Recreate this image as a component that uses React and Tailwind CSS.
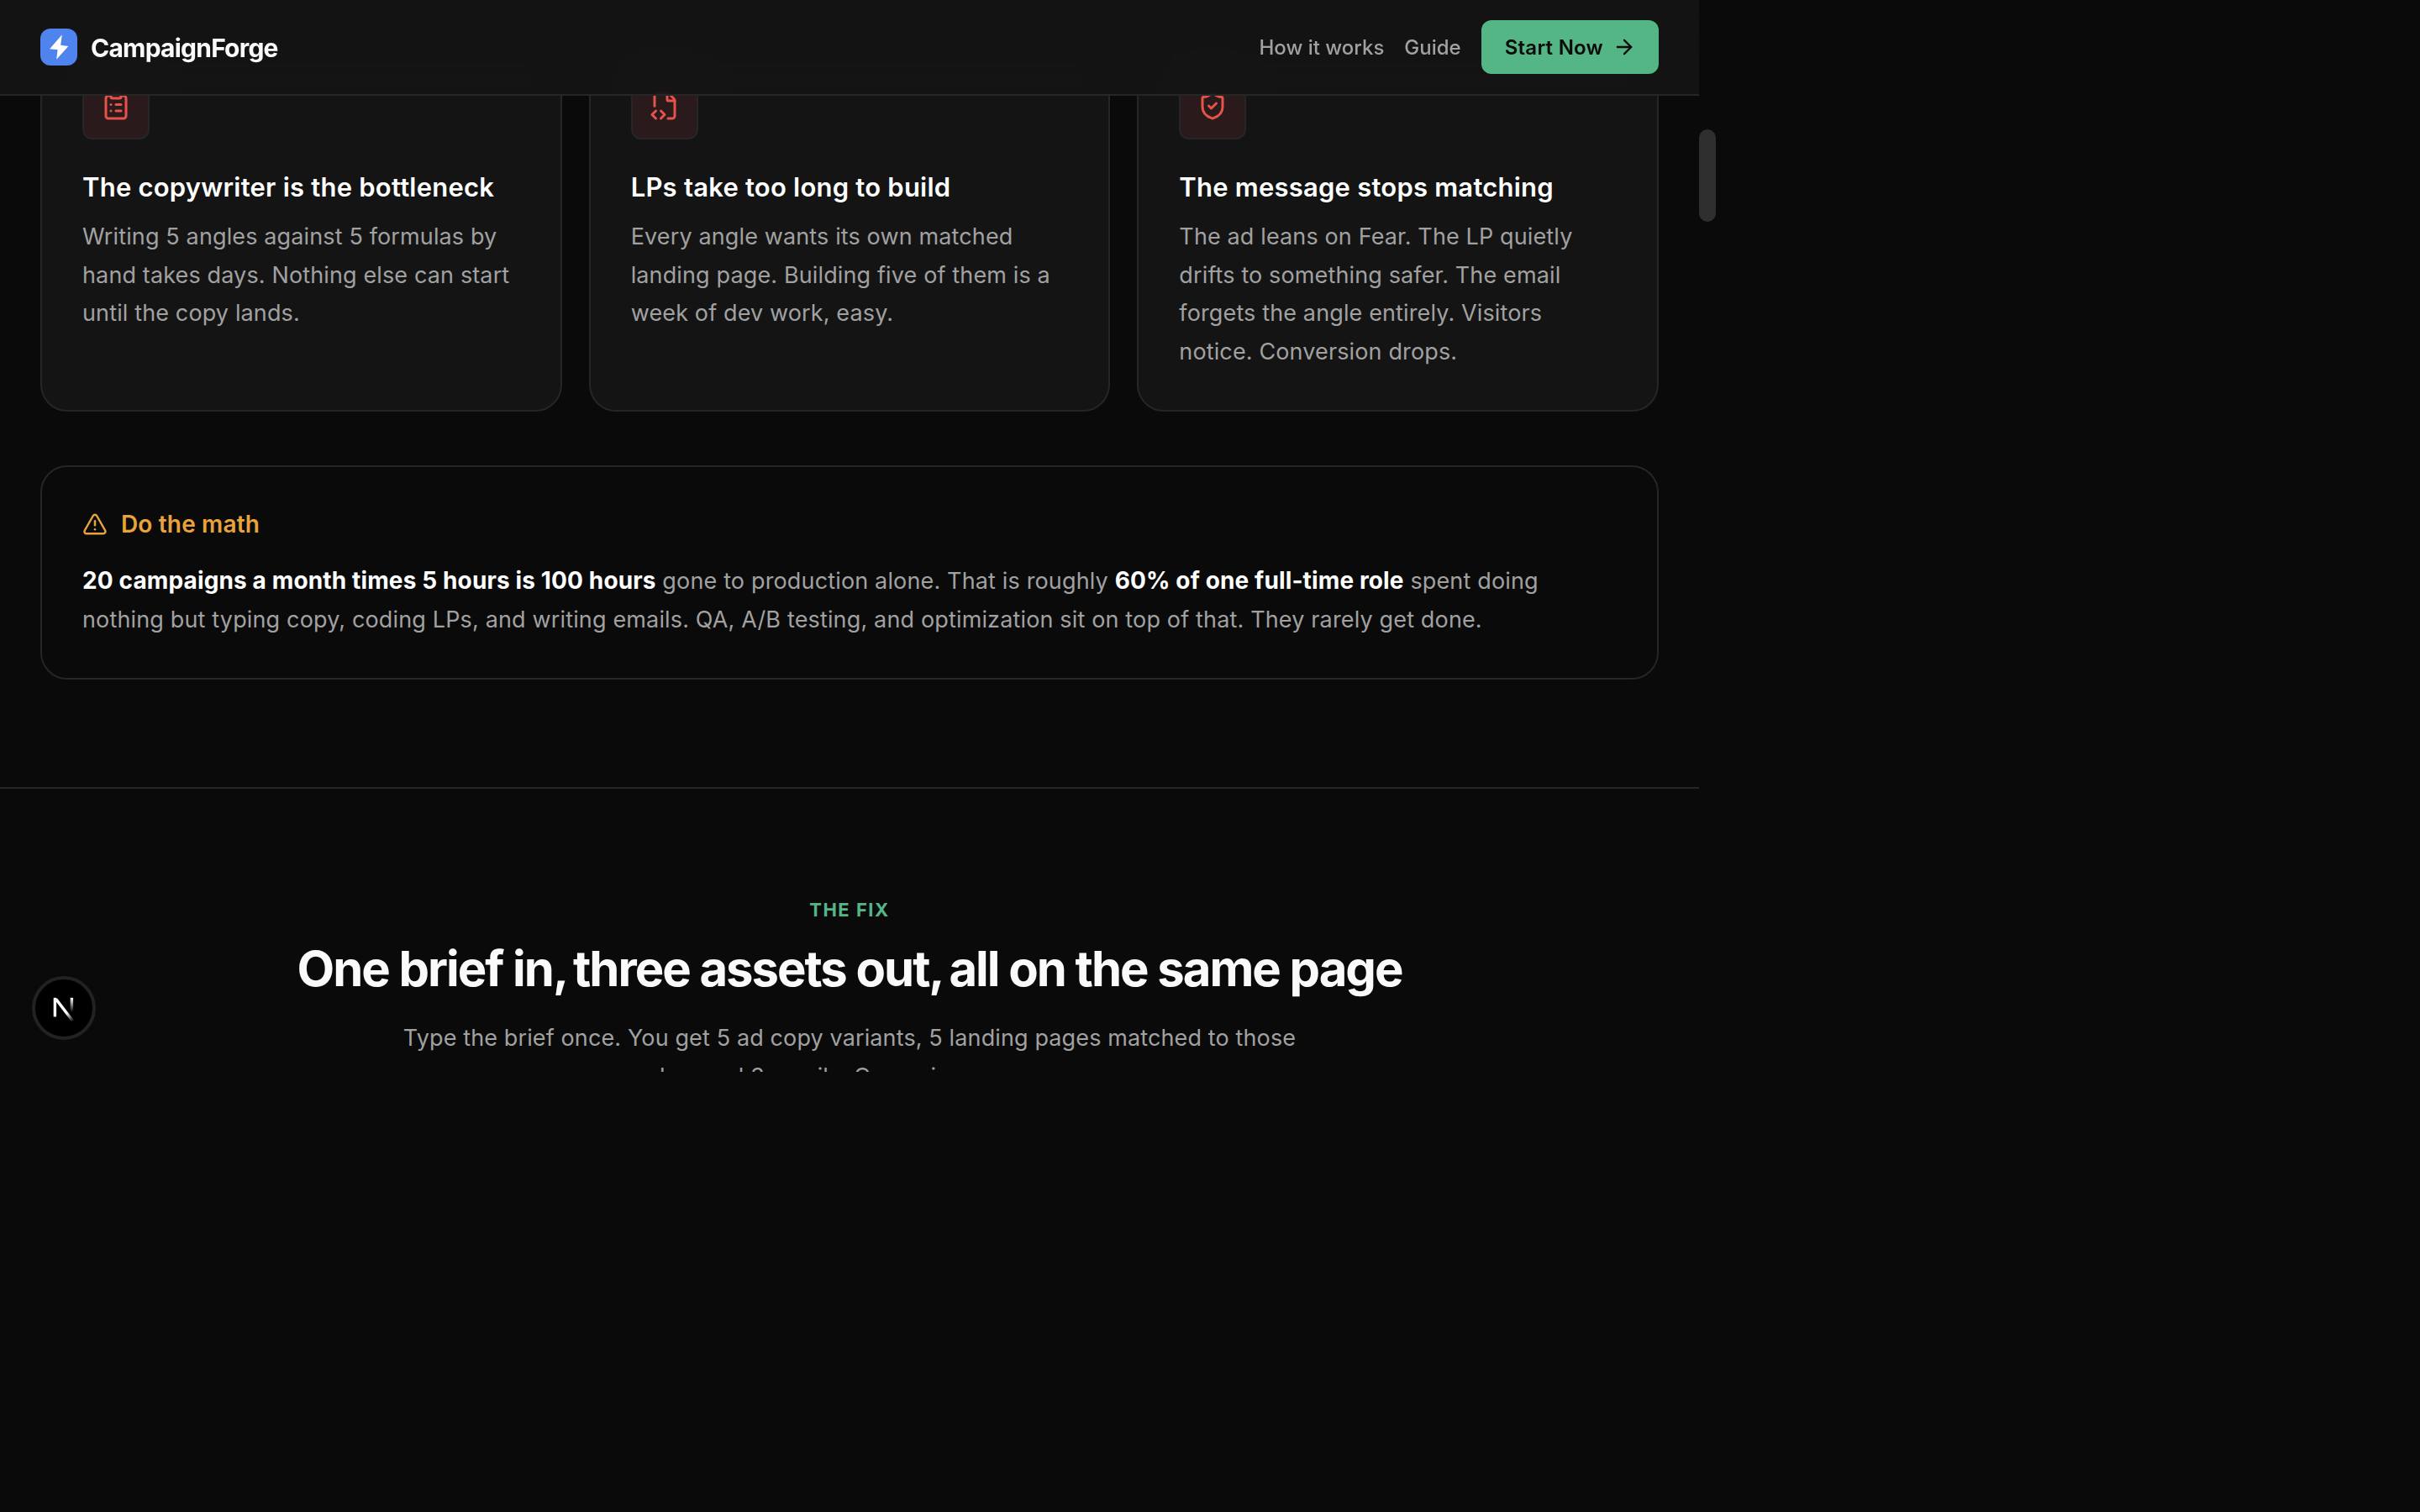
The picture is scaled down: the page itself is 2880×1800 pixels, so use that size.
import {
  ArrowRight,
  ClipboardList,
  FileCode2,
  ShieldCheck,
  TriangleAlert,
} from "lucide-react";

const problems = [
  {
    icon: ClipboardList,
    title: "The copywriter is the bottleneck",
    body: "Writing 5 angles against 5 formulas by hand takes days. Nothing else can start until the copy lands.",
  },
  {
    icon: FileCode2,
    title: "LPs take too long to build",
    body: "Every angle wants its own matched landing page. Building five of them is a week of dev work, easy.",
  },
  {
    icon: ShieldCheck,
    title: "The message stops matching",
    body: "The ad leans on Fear. The LP quietly drifts to something safer. The email forgets the angle entirely. Visitors notice. Conversion drops.",
  },
];

const Header = () => (
  <header className="absolute inset-x-0 top-0 z-10 flex h-[114px] items-center justify-between border-b-2 border-[#262626] bg-[#141414]/90 px-12 backdrop-blur-xl">
    <a href="#" className="flex items-center gap-4">
      <span className="h-11 w-11 overflow-hidden rounded-xl bg-[#4f83ee]">
        <svg viewBox="0 0 44 44" className="h-11 w-11" fill="#fff">
          <path d="M25.8 7.2 11.2 24.3l9.4.9-1.4 11.6L33.4 20.9l-9.2-1.2z" />
        </svg>
      </span>
      <span className="pt-0.5 text-[30px] font-bold tracking-[-0.78px] text-[#fafafa]">
        CampaignForge
      </span>
    </a>
    <nav className="flex items-center gap-6 text-2xl font-medium text-[#a1a1a1]">
      <a href="#" className="pt-0.5">
        How it works
      </a>
      <a href="#" className="pt-0.5">
        Guide
      </a>
      <a
        href="#"
        className="flex h-16 items-center gap-[11px] rounded-xl bg-[#55b685] pl-7 pr-[27px] font-semibold tracking-[0.25px] text-[#0a0a0a]"
      >
        <span className="pt-0.5">Start Now</span>
        <ArrowRight size={28} />
      </a>
    </nav>
  </header>
);

const ProblemCard = ({ icon: Icon, title, body }) => (
  <div className="rounded-[32px] border-2 border-[#262626] bg-[#141414] px-12 pb-[47px] pt-12">
    <div className="flex h-20 w-20 items-center justify-center rounded-xl border-2 border-[#262626] bg-[#2a1a1b]">
      <Icon size={36} className="text-[#e5534b]" />
    </div>
    <h3 className="mt-[33px] text-[31px] font-semibold leading-[48px] tracking-[0.22px] text-white">
      {title}
    </h3>
    <p className="mt-3 text-[27px] leading-[45.5px] tracking-[0.13px] text-[#a1a1a1]">
      {body}
    </p>
  </div>
);

const MathCallout = () => (
  <div className="mt-16 rounded-[32px] border-2 border-[#262626] px-12 pb-[47px] pt-12">
    <div className="flex items-center gap-4 text-[28px] font-semibold leading-10 tracking-[0.15px] text-[#e8a33d]">
      <TriangleAlert size={30} />
      Do the math
    </div>
    <p className="mt-[25px] text-[27px] leading-[45.5px] tracking-[0.15px] text-[#a1a1a1]">
      <strong className="text-[28px] font-bold leading-none tracking-[0.13px] text-white">
        20 campaigns a month times 5 hours is 100 hours
      </strong>{" "}
      gone to production alone. That is roughly{" "}
      <strong className="text-[28px] font-bold leading-none tracking-[0.13px] text-white">
        60% of one full-time role
      </strong>{" "}
      spent doing
      <br />
      nothing but typing copy, coding LPs, and writing emails. QA, A/B testing,
      and optimization sit on top of that. They rarely get done.
    </p>
  </div>
);

const DevBadge = () => (
  <div className="absolute left-[38px] top-[1162px] flex h-[76px] w-[76px] items-center justify-center rounded-full border-4 border-[#222] bg-black">
    <svg viewBox="0 0 28 32" className="mt-1 h-8 w-7" fill="none" strokeWidth="3.4">
      <defs>
        <linearGradient id="diag" gradientUnits="userSpaceOnUse" x1="17" y1="20" x2="25" y2="30">
          <stop stopColor="#fff" />
          <stop offset="1" stopColor="#fff" stopOpacity="0" />
        </linearGradient>
        <linearGradient id="stem" gradientUnits="userSpaceOnUse" x1="23" y1="2" x2="23" y2="19">
          <stop stopColor="#fff" />
          <stop offset="1" stopColor="#fff" stopOpacity="0" />
        </linearGradient>
      </defs>
      <path d="M24.8 29.8 4.6 3.4" stroke="url(#diag)" />
      <path d="M3.4 1.8V24.4" stroke="#fff" />
      <path d="M23.4 1.8V19" stroke="url(#stem)" />
    </svg>
  </div>
);

export default function App() {
  return (
    <div className="h-[1800px] w-[2880px] overflow-hidden bg-[#0a0a0a] font-['Inter',sans-serif]">
      <div className="relative flex h-[1276px] w-[2042px] overflow-hidden">
        <div className="relative h-full w-[2022px] shrink-0 overflow-hidden">
          <Header />
          <section className="border-b-2 border-[#262626] px-12 pb-32 pt-9">
            <div className="grid grid-cols-3 gap-8">
              {problems.map((p) => (
                <ProblemCard key={p.title} {...p} />
              ))}
            </div>
            <MathCallout />
          </section>
          <section className="pt-32 text-center">
            <p className="text-[22px] font-bold leading-8 tracking-[1.5px] text-[#55b685]">
              THE FIX
            </p>
            <h2 className="mt-4 text-[58px] font-bold leading-[76px] tracking-[-2.02px] text-[#fafafa]">
              One brief in<span className="tracking-[-7px]">,</span> three
              assets out<span className="tracking-[-7px]">,</span> all on the
              same page
            </h2>
            <p className="mt-[22px] text-[27px] leading-[45.5px] tracking-[0.12px] text-[#a1a1a1]">
              Type the brief once. You get 5 ad copy variants, 5 landing pages
              matched to those
              <br />
              <span className="pl-2">
                angles, and 3 emails. One voice, no seams.
              </span>
            </p>
          </section>
          <DevBadge />
        </div>
        <div className="w-5 pt-[154px]">
          <div className="h-[110px] w-5 rounded-full bg-[#2f2f2f]" />
        </div>
      </div>
    </div>
  );
}
